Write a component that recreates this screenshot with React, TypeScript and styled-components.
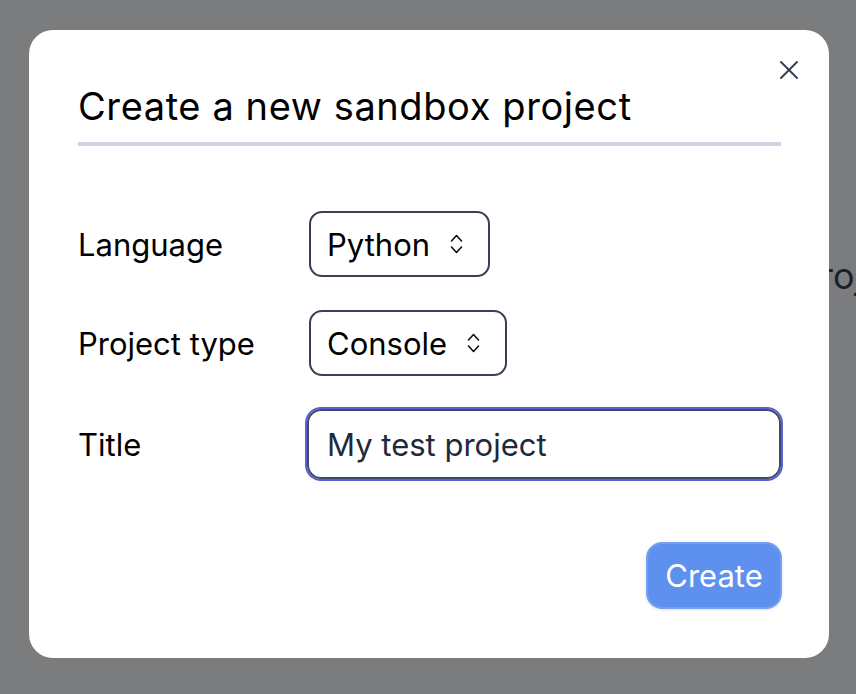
import React from "react";
import styled, { createGlobalStyle } from "styled-components";

const Global = createGlobalStyle`
  html, body { margin: 0; padding: 0; }
  body {
    width: 856px;
    height: 694px;
    overflow: hidden;
    font-family: Inter, "Noto Sans", "Liberation Sans", sans-serif;
    background: #7b7c7e;
  }
  * { box-sizing: border-box; }
`;

const Page = styled.div`
  position: relative;
  width: 856px;
  height: 694px;
  background: #7b7c7e;
  overflow: hidden;
`;

const PageHeading = styled.div`
  padding: 254px 0 0 797px;
  white-space: nowrap;
  font-size: 36px;
  color: #1d2029;
`;

const Overlay = styled.div`
  position: absolute;
  inset: 0;
  padding: 30px 27px 36px 29px;
  display: flex;
  align-items: flex-start;
`;

const Dialog = styled.div`
  position: relative;
  width: 800px;
  height: 628px;
  background: #ffffff;
  border-radius: 24px;
  padding: 49px 48px 49px 49px;
  display: flex;
  flex-direction: column;
`;

const CloseButton = styled.button`
  position: absolute;
  top: 28px;
  right: 28px;
  width: 24px;
  height: 24px;
  padding: 0;
  border: none;
  background: none;
  display: flex;
  align-items: center;
  justify-content: center;
  color: #334155;
`;

const Title = styled.h2`
  margin: 0;
  font-size: 38px;
  letter-spacing: 0.6px;
  font-weight: 400;
  line-height: 54px;
  color: #000000;
  padding-bottom: 9px;
  border-bottom: 4px solid #cbd5e1;
`;

const Form = styled.div`
  display: flex;
  flex-direction: column;
  gap: 33px;
  margin-top: 65px;
`;

const Row = styled.div`
  display: flex;
  align-items: center;
`;

const Label = styled.label`
  width: 231px;
  flex: none;
  font-size: 31px;
  color: #000000;
`;

const SelectBox = styled.div`
  height: 66px;
  border: 2px solid #374151;
  border-radius: 13px;
  padding: 0 25px 0 16px;
  display: flex;
  align-items: center;
  gap: 20px;
  font-size: 31px;
  color: #000000;
`;

const TextInput = styled.div`
  width: 474px;
  height: 70px;
  margin-left: -2px;
  border: 2px solid #3f4a63;
  border-radius: 14px;
  box-shadow: 0 0 0 2px #5b5fd6;
  padding: 0 18px;
  display: flex;
  align-items: center;
  font-size: 31px;
  color: #1e293b;
`;

const Footer = styled.div`
  margin-top: auto;
  display: flex;
  justify-content: flex-end;
`;

const CreateButton = styled.button`
  width: 136px;
  height: 67px;
  border: 2px solid #74a0f3;
  border-radius: 16px;
  background: #5e90ef;
  color: #ffffff;
  font-family: inherit;
  font-size: 31px;
  box-shadow: 0 1px 3px rgba(0, 0, 0, 0.12);
  margin-right: -1px;
`;

const UpDown = () => (
  <svg width="13" height="20" viewBox="0 0 13 20" fill="none" stroke="#111" strokeWidth="1.6" strokeLinecap="round" strokeLinejoin="round">
    <path d="M1.5 7 L6.5 1.5 L11.5 7" />
    <path d="M1.5 13 L6.5 18.5 L11.5 13" />
  </svg>
);

const CloseIcon = () => (
  <svg width="20" height="20" viewBox="0 0 20 20" fill="none" stroke="currentColor" strokeWidth="2" strokeLinecap="round">
    <path d="M2 2 L18 18" />
    <path d="M18 2 L2 18" />
  </svg>
);

export default function App() {
  return (
    <>
      <Global />
      <Page>
        <PageHeading>Projects</PageHeading>
        <Overlay>
          <Dialog>
            <CloseButton aria-label="Close">
              <CloseIcon />
            </CloseButton>
            <Title>Create a new sandbox project</Title>
            <Form>
              <Row>
                <Label>Language</Label>
                <SelectBox>
                  Python
                  <UpDown />
                </SelectBox>
              </Row>
              <Row>
                <Label>Project type</Label>
                <SelectBox>
                  Console
                  <UpDown />
                </SelectBox>
              </Row>
              <Row>
                <Label>Title</Label>
                <TextInput>My test project</TextInput>
              </Row>
            </Form>
            <Footer>
              <CreateButton>Create</CreateButton>
            </Footer>
          </Dialog>
        </Overlay>
      </Page>
    </>
  );
}
